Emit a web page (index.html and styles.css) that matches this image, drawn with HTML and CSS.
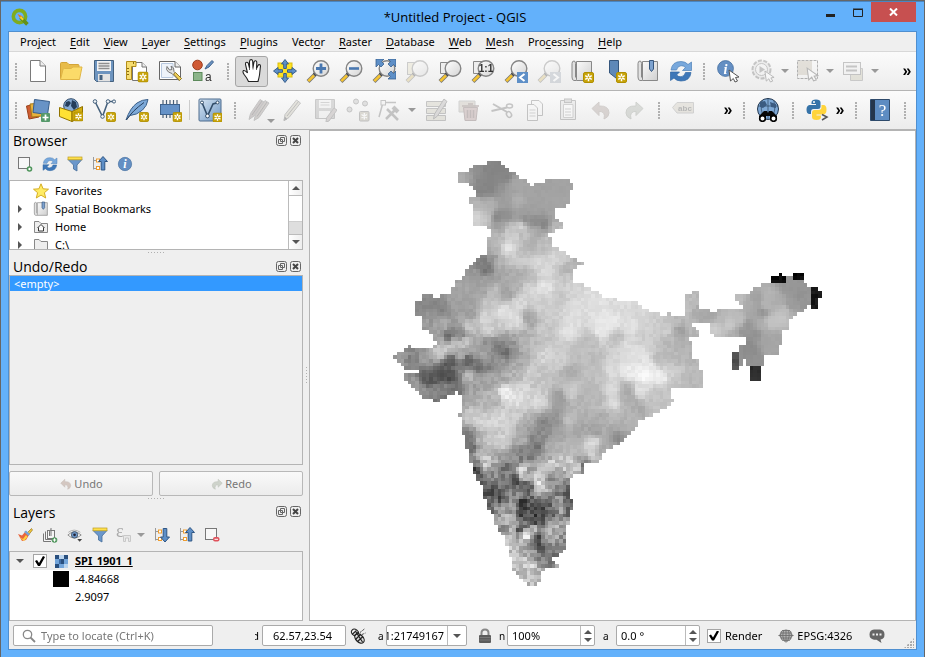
FILE: index.html
```html
<!DOCTYPE html>
<html lang="en">
<head>
<meta charset="utf-8">
<title>*Untitled Project - QGIS</title>
<link rel="stylesheet" href="styles.css">
</head>
<body>
<svg class="sprite" width="0" height="0" aria-hidden="true">
  <defs>
    <linearGradient id="gGlass" x1="0" y1="0" x2="1" y2="1"><stop offset="0" stop-color="#fff"/><stop offset="1" stop-color="#d4d4d4"/></linearGradient>
    <linearGradient id="gBlue" x1="0" y1="0" x2="1" y2="1"><stop offset="0" stop-color="#d8e6f3"/><stop offset="1" stop-color="#6c96c4"/></linearGradient>
    <linearGradient id="gPaper" x1="0" y1="0" x2="1" y2="1"><stop offset="0" stop-color="#fafafa"/><stop offset="1" stop-color="#cfcfcf"/></linearGradient>
  </defs>
  <symbol id="star" viewBox="0 0 11 11"><rect x=".5" y=".5" width="10" height="10" rx="1.5" fill="#c8a40a" stroke="#b08f00"/><path d="M5.500 1.800V9.200M2.200 3.700 8.800 7.300M8.800 3.700 2.200 7.300" stroke="#fff" stroke-width="1.500"/><circle cx="5.500" cy="5.500" r="1" fill="#c8a40a"/></symbol>
  <symbol id="cursor" viewBox="0 0 12 14"><path d="M1 1 11 8 7.500 8.500 9.500 12 7 13 5.300 9.500 2.500 12Z" fill="#fff" stroke="#555" stroke-width="1"/></symbol>
  <symbol id="lens" viewBox="0 0 24 24"><path d="M9.500 15 2 22.500" stroke="#777" stroke-width="4"/><path d="M8 16.500 2.300 22.200" stroke="#f5c431" stroke-width="2.600"/><path d="M10.500 13.500 8.500 15.500" stroke="#111" stroke-width="3.500"/><circle cx="15" cy="9.500" r="7.800" fill="url(#gGlass)" stroke="#858585" stroke-width="1.400"/></symbol>
  <symbol id="new" viewBox="0 0 24 24"><path d="M4.500 1.500H14L19.500 7V22.500H4.500Z" fill="#fff" stroke="#7a7a7a"/><path d="M14 1.500V7H19.500" fill="#eee" stroke="#7a7a7a"/></symbol>
  <symbol id="open" viewBox="0 0 24 24"><path d="M1.500 19.500V4.500Q1.500 3.500 2.500 3.500H8L10 5.500H19Q20 5.500 20 6.500V20Z" fill="#e8bc4a" stroke="#d3a437"/><path d="M1.500 20.500 4 10.500Q4.300 9.500 5.500 9.500H12L14 8H23L20.500 20.500Z" fill="#fbdb69" stroke="#e0b646"/></symbol>
  <symbol id="save" viewBox="0 0 24 24"><path d="M2.500 1.500H21.500V22.500H4.500L2.500 20.500Z" fill="#6d94bf" stroke="#44617f"/><rect x="5" y="2" width="14" height="10" fill="#f3f3f3"/><path d="M6.500 4.500H17.500M6.500 7H17.500M6.500 9.500H17.500" stroke="#8f8f8f" stroke-width="1.300"/><rect x="6" y="15" width="12" height="7.500" fill="#e3e3e3"/><rect x="7.500" y="16" width="3" height="5" fill="#44617f"/></symbol>
  <symbol id="layout" viewBox="0 0 24 24"><path d="M7.500 3.500H17L21.500 8V21.500H7.500Z" fill="#fff" stroke="#777"/><path d="M17 3.500V8H21.500" fill="#eee" stroke="#777"/><path d="M1.500 2.500H11V7.500H6.500V20.500H1.500Z" fill="#f6dd70" stroke="#b38d18"/><path d="M2 9.500H4M2 12.500H4M2 15.500H4M8.500 3V5" stroke="#8a6b10"/></symbol>
  <symbol id="layoutnew" viewBox="0 0 24 24"><use href="#layout" width="24" height="24"/><use href="#star" x="12.500" y="12.500" width="11" height="11"/></symbol>
  <symbol id="manager" viewBox="0 0 24 24"><path d="M1.500 2.500H17L22.500 8V20.500H1.500Z" fill="#fff" stroke="#666"/><path d="M3.500 4.500H15V18.500H3.500Z" fill="#eef3fa" stroke="#b8c9e0"/><path d="M17 2.500V8H22.500" fill="#eee" stroke="#666"/><path d="M9 7.500Q7.500 11 10.500 13L14 14.500 21 21.500 23 19.500 16 12.500Q16.500 8 13 7L14 10.500 11.500 11Z" fill="#e4e4e4" stroke="#777"/><path d="M15.500 15 21.500 21.500 23.500 19.500 17.500 13.500Z" fill="#f4d35b" stroke="#91782a"/></symbol>
  <symbol id="style" viewBox="0 0 24 24"><circle cx="6.500" cy="6" r="4.800" fill="#cf5a35" stroke="#9c3d1e"/><path d="M14 10 16 6.500 21 1.500 22.500 3 18 8Z" fill="#6a92c2" stroke="#3f638d"/><rect x="2.500" y="13.500" width="8.500" height="8" fill="#8cb58a" stroke="#5c8a5b"/><text x="14" y="22" font-family="Liberation Sans, sans-serif" font-size="12" fill="#333">a</text></symbol>
  <symbol id="hand" viewBox="0 0 24 26"><path d="M8.500 23.500Q7 20 4.500 17 2 13.500 3.500 12.500 5 12 7.500 15L5.500 6.500Q5.200 4.500 6.500 4.300 8 4 8.500 6L9.500 10V3.500Q9.700 1.500 11.300 1.500 12.600 1.700 12.700 3.500L13 9.500 14 4Q14.500 2.400 15.800 2.800 17 3.200 16.800 5L16.500 10.500 18 7.500Q19 6 20.200 7 20.800 7.800 20.300 9.500L19.500 17Q19 20 18 23.500Z" fill="#fff" stroke="#222" stroke-width="1.100"/><path d="M9.500 9V12M13 9V11.500M16.500 10V12" stroke="#333" stroke-width=".8"/></symbol>
  <symbol id="pansel" viewBox="0 0 24 24"><rect x="5" y="4" width="14" height="14" fill="#ffe11f" stroke="#d9bd10"/><path d="M12 .5 15.500 5H13.300V9.500H10.700V5H8.500ZM12 23.500 15.500 19H13.300V14.500H10.700V19H8.500ZM.5 12 5 8.500V10.700H9.500V13.300H5V15.500ZM23.500 12 19 8.500V10.700H14.500V13.300H19V15.500Z" fill="#5e8fc7" stroke="#2f5684" stroke-width=".9"/></symbol>
  <symbol id="zoomin" viewBox="0 0 24 24"><use href="#lens" width="24" height="24"/><path d="M15 4.500V14.500M10 9.500H20" stroke="#4a78b0" stroke-width="2.800"/></symbol>
  <symbol id="zoomout" viewBox="0 0 24 24"><use href="#lens" width="24" height="24"/><path d="M10 9.500H20" stroke="#4a78b0" stroke-width="2.600"/></symbol>
  <symbol id="zoomfull" viewBox="0 0 24 24"><use href="#lens" width="24" height="24"/><path d="M4 0H12L9.500 2.500 12 5 9 8 6.500 5.500 4 8ZM24 0V8L21.500 5.500 19 8 16 5 18.500 2.500 16 0ZM24 20V12L21.500 14.500 19 12 16 15 18.500 17.500 16 20Z" fill="#5e8fc7" stroke="#38618f" stroke-width=".8"/></symbol>
  <symbol id="zoomsel" viewBox="0 0 24 24"><rect x="2.500" y="3.500" width="12" height="12" fill="#e8dfa9" stroke="#888"/><use href="#lens" width="24" height="24"/></symbol>
  <symbol id="zoomlayer" viewBox="0 0 24 24"><path d="M2.500 3.500H13V14.500H2.500Z" fill="#eee" stroke="#888"/><use href="#lens" width="24" height="24"/></symbol>
  <symbol id="zoomnative" viewBox="0 0 24 24"><path d="M2.500 2.500H13V14.500H2.500Z" fill="#eee" stroke="#888"/><use href="#lens" width="24" height="24"/><text x="15" y="13" text-anchor="middle" font-family="Liberation Sans, sans-serif" font-weight="bold" font-size="10" fill="#333">1:1</text></symbol>
  <symbol id="zoomlast" viewBox="0 0 24 24"><use href="#lens" width="24" height="24"/><rect x="13" y="13" width="11" height="11" fill="#5e8fc7"/><path d="M20.500 15 16 18.500 20.500 22" fill="none" stroke="#fff" stroke-width="2"/></symbol>
  <symbol id="zoomnext" viewBox="0 0 24 24"><use href="#lens" width="24" height="24"/><rect x="13" y="13" width="11" height="11" fill="#9fb0c4"/><path d="M16.500 15 21 18.500 16.500 22" fill="none" stroke="#fff" stroke-width="2"/></symbol>
  <symbol id="book" viewBox="0 0 24 24"><path d="M6.500 2.500H21.500V21.500H6.500Z" fill="url(#gPaper)" stroke="#888"/><path d="M6.500 21.500H4Q2 21.500 2 18V4.500Q2 2 4 2 5.500 2 5.500 4.500V18.500" fill="#e2e2e2" stroke="#888"/></symbol>
  <symbol id="mapview" viewBox="0 0 24 24"><use href="#book" width="24" height="24"/><use href="#star" x="13" y="13" width="11" height="11"/></symbol>
  <symbol id="bookmarknew" viewBox="0 0 24 24"><path d="M6.500 1.500H15.500V21L11 17.500 6.500 14Z" fill="#5e88b8" stroke="#36567d"/><use href="#star" x="13" y="13" width="11" height="11"/></symbol>
  <symbol id="bookmarks" viewBox="0 0 24 24"><use href="#book" width="24" height="24"/><path d="M13.500 1.500H17.500V10L15.500 12.500 13.500 10Z" fill="#7da2cf" stroke="#36567d"/></symbol>
  <symbol id="refresh" viewBox="0 0 24 24"><path d="M2 11Q3 2.500 12 2.500 16.500 2.500 19 5.500L22.500 3V11.500H13.500L16.500 8.500Q14.500 6.500 12 6.700 8.500 7 7.500 11Z" fill="#78a8dc" stroke="#4c80b8" stroke-width=".7"/><path d="M22 13.500Q21 22 12 22 7.500 22 5 19L1.500 21.500V13H10.500L7.500 16Q9.500 18 12 17.800 15.500 17.500 16.500 13.500Z" fill="#3e77b8" stroke="#2e65a3" stroke-width=".7"/></symbol>
  <symbol id="infodot" viewBox="0 0 24 24"><circle cx="12" cy="12" r="10" fill="#648fc3" stroke="#456f9f"/><text x="12" y="18.500" text-anchor="middle" font-family="Liberation Serif, serif" font-weight="bold" font-style="italic" font-size="18" fill="#fff">i</text></symbol>
  <symbol id="identify" viewBox="0 0 24 24"><use href="#infodot" x="0" y="0" width="19" height="19"/><use href="#cursor" x="12" y="10" width="12" height="14"/></symbol>
  <symbol id="action" viewBox="0 0 24 24"><circle cx="10.500" cy="10.500" r="9" fill="#ddd" stroke="#777" stroke-width="2" stroke-dasharray="4 1.500"/><circle cx="10.500" cy="10.500" r="6" fill="#eee" stroke="#777"/><path d="M8.500 7 14 10.500 8.500 14Z" fill="#777"/><use href="#cursor" x="13" y="11" width="11" height="13"/></symbol>
  <symbol id="select" viewBox="0 0 24 24"><rect x="1.500" y="1.500" width="20" height="18" fill="none" stroke="#444" stroke-dasharray="3 1"/><rect x="2" y="2" width="14" height="14" fill="#c9bc97"/><use href="#cursor" x="10" y="8" width="13" height="15"/></symbol>
  <symbol id="form" viewBox="0 0 24 24"><path d="M9.500 9.500H21.500V21.500H9.500Z" fill="#cfc49f" stroke="#888"/><rect x="2.500" y="3.500" width="17" height="12" fill="#eee" stroke="#777"/><path d="M5 7.500H16M5 11.500H16" stroke="#777" stroke-width="2"/></symbol>
  <symbol id="source" viewBox="0 0 24 24"><path d="M.5 8 11 6 13 19 3 21Z" fill="#cf5d32" stroke="#9b4019"/><path d="M4 6 15 5 16 18 6 19Z" fill="#e8b23e" stroke="#a87a19"/><path d="M8.500 1.500 23.500 3.500 21.500 16.500 7 14.500Z" fill="#6893c6" stroke="#375d8a"/><rect x="15" y="15" width="9" height="9" rx="1" fill="#55996a"/><path d="M19.500 16.500V22.500M16.500 19.500H22.500" stroke="#fff" stroke-width="1.700"/></symbol>
  <symbol id="gpkg" viewBox="0 0 24 24"><circle cx="12" cy="8" r="7.300" fill="#86abd3" stroke="#2e4a69"/><path d="M7 4 10 3 12 5 9 9 6 8ZM13 2 17 4 18 9 15 12 12 8Z" fill="#253e5b"/><path d="M.5 9.500 13 13.500V23.500L.5 18.500Z" fill="#ffe133" stroke="#917300"/><path d="M13 13.500 23.500 8.500V18.500L13 23.500Z" fill="#d2ad10" stroke="#917300"/><use href="#star" x="14.500" y="13.500" width="10" height="10"/></symbol>
  <symbol id="vector" viewBox="0 0 24 24"><path d="M3 3.500 10.500 18.500 16 3.500H22" fill="none" stroke="#435f7b" stroke-width="1.500"/><g fill="#f2f5f8" stroke="#435f7b"><circle cx="3" cy="3.500" r="1.800"/><circle cx="16" cy="3.500" r="1.800"/><circle cx="22" cy="3.500" r="1.600"/><circle cx="10.500" cy="18.500" r="1.800"/></g></symbol>
  <symbol id="shape" viewBox="0 0 24 24"><use href="#vector" width="24" height="24"/><use href="#star" x="14" y="14" width="10" height="10"/></symbol>
  <symbol id="feather" viewBox="0 0 24 24"><path d="M1 22Q5 10 12 5 17 1.500 23 1.500 22 8 17.500 12 12 17 5 17.500Z" fill="#7da9d8" stroke="#3b5f88"/><path d="M1.500 22Q7 13 19 4.500" stroke="#27405f" fill="none"/><use href="#star" x="14" y="14" width="10" height="10"/></symbol>
  <symbol id="chip" viewBox="0 0 24 24"><path d="M5 2V20M8.500 2V20M12 2V20M15.500 2V20M19 2V20" stroke="#4b6076" stroke-width="1.200"/><rect x="2.500" y="6.500" width="19" height="10" fill="#6592c7" stroke="#3f638d"/><use href="#star" x="14.500" y="14" width="10" height="10"/></symbol>
  <symbol id="virtual" viewBox="0 0 24 24"><rect x="1" y="1" width="22" height="22" rx="1" fill="url(#gBlue)" stroke="#4e6d8e"/><path d="M4 4.500 9.500 18 15 6 20.500 4.500" fill="none" stroke="#334e6a" stroke-width="1.600"/><circle cx="9.500" cy="18" r="1.900" fill="#fff" stroke="#334e6a"/><circle cx="4" cy="4.500" r="1.500" fill="#fff" stroke="#334e6a"/><circle cx="19.500" cy="4.500" r="1.500" fill="#fff" stroke="#334e6a"/><use href="#star" x="14.500" y="14.500" width="10" height="10"/></symbol>
  <symbol id="pencil" viewBox="0 0 24 24"><path d="M16.500 2 20.500 5 9 19.500 4 22.500 5 16.500Z" fill="#c9c3a4" stroke="#777"/><path d="M18.500 3.500 7 18M4 22.500 5 19 7 21Z" stroke="#666" fill="#444"/></symbol>
  <symbol id="edits" viewBox="0 0 24 24"><path d="M13 1.500 17 4 7 18 2 21.500 3.500 15.500Z" fill="#9b8383" stroke="#777"/><path d="M18 2.500 22 5 12 19.500 7 22.500 8.500 16.500Z" fill="#a4918a" stroke="#777"/><path d="M15 3 5 17M20 4 10 18.500" stroke="#555"/></symbol>
  <symbol id="saveedit" viewBox="0 0 24 24"><g opacity=".8"><path d="M2.500 1.500H21.500V20.500H2.500Z" fill="#999" stroke="#666"/><rect x="6" y="2" width="12" height="8" fill="#eee"/><rect x="6" y="13" width="11" height="7" fill="#eee"/><path d="M7.500 4.500H16.500M7.500 7H16.500" stroke="#888"/></g><path d="M21 10 24 12 16 23 13 24 13.500 20Z" fill="#b3a0a0" stroke="#777"/></symbol>
  <symbol id="points" viewBox="0 0 24 24"><g fill="#bbb" stroke="#777"><circle cx="10" cy="3.500" r="2.500"/><circle cx="19" cy="5.500" r="2.500"/><circle cx="3.500" cy="11.500" r="2.500"/></g><rect x="13.500" y="13.500" width="9.500" height="9.500" rx="1" fill="#b6ae8c" stroke="#777"/><path d="M18.300 15V21.500M15.500 16.500 21 20M21 16.500 15.500 20" stroke="#fff" stroke-width="1.400"/></symbol>
  <symbol id="vertex" viewBox="0 0 24 24"><path d="M5 4.500H18M5 4.500 1 19" stroke="#777" fill="none" stroke-width="1.500"/><rect x="3" y="2.500" width="4.500" height="4.500" fill="#eee" stroke="#777"/><path d="M9 11 20 22M18 11 8 21" stroke="#777" stroke-width="2.500"/><path d="M15 9 20 14" stroke="#777" stroke-width="4"/></symbol>
  <symbol id="attrs" viewBox="0 0 24 24"><g fill="#cfc9a7" stroke="#777"><path d="M2.500 3.500H21.500V8.500H2.500ZM2.500 10.500H21.500V15.500H2.500ZM2.500 17.500H21.500V22.500H2.500Z"/></g><path d="M20 1 23 3.500 13.500 18 9.500 21 10.500 16Z" fill="#b2aeb0" stroke="#666"/></symbol>
  <symbol id="trash" viewBox="0 0 24 24"><path d="M2 3H18V14H2Z" fill="#c8bca5" stroke="#999"/><path d="M6.500 9.500H20.500L19 22.500H8Z" fill="#c68f8f" stroke="#8a6262"/><path d="M5 8H22M11 6H16M10.500 12V20M13.500 12V20M16.500 12V20" stroke="#8a6262" stroke-width="1.500"/></symbol>
  <symbol id="cut" viewBox="0 0 24 24"><path d="M3 6 17 14M1.500 13 17 9.500" stroke="#777" stroke-width="2"/><ellipse cx="19.500" cy="8" rx="3" ry="2" fill="none" stroke="#777" stroke-width="1.500"/><ellipse cx="19" cy="16.500" rx="2.300" ry="3" transform="rotate(-35 19 16.500)" fill="none" stroke="#777" stroke-width="1.500"/></symbol>
  <symbol id="copy" viewBox="0 0 24 24"><g fill="#f4f4f4" stroke="#777"><path d="M8.500 2.500H16L19.500 6V17.500H8.500Z"/><path d="M4.500 6.500H11L14.500 10V22.500H4.500Z"/></g><path d="M6.500 12H12.500M6.500 15H12.500M6.500 18H12.500" stroke="#999"/></symbol>
  <symbol id="paste" viewBox="0 0 24 24"><path d="M4.500 2.500H19.500V21.500H4.500Z" fill="#dedede" stroke="#777"/><path d="M7.500 6.500H17V19.500H7.500Z" fill="#fafafa" stroke="#999"/><rect x="8.500" y="1" width="7" height="3.500" fill="#bbb" stroke="#777"/><path d="M9 11H15M9 14H15M9 17H15" stroke="#999"/></symbol>
  <symbol id="undo" viewBox="0 0 24 24"><path d="M3 10.500 10 4V8Q20 7.500 20 15 20 19 15 21 17 13.500 10 13.300V17.500Z" fill="#b59c90" stroke="#a08d84"/></symbol>
  <symbol id="redo" viewBox="0 0 24 24"><path d="M21 10.500 14 4V8Q4 7.500 4 15 4 19 9 21 7 13.500 14 13.300V17.500Z" fill="#a9b3a3" stroke="#8d9887"/></symbol>
  <symbol id="label" viewBox="0 0 24 24"><path d="M1.500 9.500 6 4.500H22.500V15H6Z" fill="#cfc9ad" stroke="#999"/><text x="14" y="13" text-anchor="middle" font-family="Liberation Sans, sans-serif" font-weight="bold" font-size="8" fill="#555">abc</text></symbol>
  <symbol id="metasearch" viewBox="0 0 24 24"><circle cx="12" cy="11" r="10.500" fill="#7fa9d6" stroke="#20354e"/><path d="M12 .5V21M2 8H22M6 3Q4 11 7 19M18 3Q20 11 17 19" stroke="#20354e" fill="none" stroke-width=".6"/><path d="M4 4 9 3 11 7 7 10 4 9ZM14 4 20 6 20 10 15 9Z" fill="#3b5b81"/><path d="M8 13H11L12 15 13 13H16L21 18V22H14V18H10V22H3V18Z" fill="#080808"/><circle cx="6.500" cy="20.500" r="2.800" fill="#fff" stroke="#000" stroke-width="1.600"/><circle cx="17.500" cy="20.500" r="2.800" fill="#fff" stroke="#000" stroke-width="1.600"/></symbol>
  <symbol id="python" viewBox="0 0 24 24"><path d="M6.500 6V4.500Q6.500 1.500 11 1.500T15.500 4.500V9Q15.500 11 13 11H8.500Q6 11 6 14V16H4Q1.500 15.500 1.500 11.500T4.500 7H11V6Z" fill="#3673a8"/><path d="M16.500 7H18.500Q21.500 7 21.500 11.500T18.500 16.500H11.500V17.500H16V19Q16 22 11.500 22T7 19V15Q7 12 9.500 12H13.500Q16.500 12 16.500 9Z" fill="#ffd43b"/><circle cx="9" cy="4" r="1" fill="#fff"/><path d="M17 16.500 22 19 17 22" stroke="#555" stroke-width="1.500" fill="none"/></symbol>
  <symbol id="help" viewBox="0 0 24 24"><path d="M2.500 1.500H21.500V22.500H2.500Z" fill="#5d8cc2" stroke="#2e4a6b"/><path d="M3 2H7V22H3Z" fill="#25364c"/><text x="14.500" y="17.500" text-anchor="middle" font-family="Liberation Serif, serif" font-size="17" fill="#fff">?</text></symbol>
  <symbol id="addlayer" viewBox="0 0 16 16"><rect x="1.500" y="1.500" width="11" height="11" fill="#f7f7f7" stroke="#777"/><circle cx="12.500" cy="13" r="2.800" fill="#4e955b"/><circle cx="12.500" cy="13" r="1.200" fill="#fff"/></symbol>
  <symbol id="funnel" viewBox="0 0 16 16"><path d="M1 3.500H15L10 9V15L6.500 13V9Z" fill="#6b97cb" stroke="#446d9b" stroke-width=".8"/><rect x="1" y="1" width="14" height="2.800" fill="#ffe04c" stroke="#bd9d20" stroke-width=".7"/></symbol>
  <symbol id="treebase" viewBox="0 0 16 16"><path d="M1.500 1V13.500M1.500 4.500H4M1.500 12.500H4" stroke="#999"/><rect x="4.500" y="3" width="3" height="3" fill="#fff" stroke="#ef9d2f"/><rect x="4.500" y="10.500" width="3" height="3" fill="#fff" stroke="#ef9d2f"/></symbol>
  <symbol id="collapse" viewBox="0 0 16 16"><use href="#treebase" width="16" height="16"/><path d="M11 .5 15.500 5.500H12.800V14H9.200V5.500H6.500Z" fill="#5e8fc7" stroke="#2f5684"/></symbol>
  <symbol id="expand" viewBox="0 0 16 16"><use href="#treebase" width="16" height="16"/><path d="M11 15 15.500 10H12.800V1.500H9.200V10H6.500Z" fill="#5e8fc7" stroke="#2f5684"/></symbol>
  <symbol id="fav" viewBox="0 0 16 16"><path d="M8 .8 10.100 5.800 15.500 6.200 11.400 9.700 12.700 15 8 12.100 3.300 15 4.600 9.700.5 6.200 5.900 5.800Z" fill="#ffec64" stroke="#d5ad24"/></symbol>
  <symbol id="folder" viewBox="0 0 16 16"><path d="M1.500 13.500V2.500H6L8 4.500H14.500V13.500Z" fill="#eee" stroke="#888"/></symbol>
  <symbol id="home" viewBox="0 0 16 16"><use href="#folder" width="16" height="16"/><path d="M4.500 9 8 5.500 11.500 9M5.500 8.500V12H10.500V8.500" fill="#fff" stroke="#333"/></symbol>
  <symbol id="brush" viewBox="0 0 16 16"><path d="M10 6 14.500 1.500 15.500 3 11.500 8Z" fill="#f0c63b" stroke="#9c7b27" stroke-width=".7"/><path d="M1 7 5 8.500 8 5 12 8 9 13 5 14Z" fill="#e9653d"/><path d="M2 10 6 12 9 8 10.500 10 7 14Z" fill="#ffcf3c"/><path d="M7 5 9 3.500 13 7 11.500 9Z" fill="#77a4d4"/></symbol>
  <symbol id="group" viewBox="0 0 16 16"><g fill="#f5f5f5" stroke="#777"><path d="M1.500 6.500V14.500H9M3.500 4.500V12.500H11"/><rect x="5.500" y="3.500" width="7" height="8"/><path d="M9 1V9M7.500 9V5Q7.500 3 9 3"/></g><circle cx="12.500" cy="13" r="2.800" fill="#4e955b"/><path d="M12.500 11.300V14.700M10.800 13H14.200" stroke="#fff"/></symbol>
  <symbol id="eye" viewBox="0 0 18 16"><path d="M1 8Q8 1 16 8 8 15 1 8Z" fill="#f4f4f4" stroke="#888"/><circle cx="8.500" cy="7.800" r="3.600" fill="#6d98cc" stroke="#456"/><circle cx="8.500" cy="7.800" r="1.500" fill="#223"/><path d="M1.500 5Q8 0 15 5" fill="none" stroke="#aaa"/><path d="M11.500 12.500H17L14.200 15.500Z" fill="#444"/></symbol>
  <symbol id="expr" viewBox="0 0 16 16"><text x="0" y="10" font-family="Liberation Serif, serif" font-size="18" fill="#555">ε</text><path d="M7.500 8.500H14.500V14.500H12.500V11H9.500V14.500H7.500Z" fill="#ddd" stroke="#999"/></symbol>
  <symbol id="remove" viewBox="0 0 16 16"><rect x="1.500" y="1.500" width="11" height="11" fill="#f7f7f7" stroke="#777"/><rect x="9" y="10" width="6.500" height="4.500" rx="2" fill="#e0525c"/><path d="M10.500 12.300H14" stroke="#fff"/></symbol>
  <symbol id="raster" viewBox="0 0 13 13"><path d="M0 0H13V13H0Z" fill="#73a5da"/><path d="M0 0H4V4H0ZM9 0H13V4H9ZM4 4H9V9H4ZM0 9H4V13H0Z" fill="#294f7e"/><path d="M4 0H9V4H4ZM9 9H13V13H9Z" fill="#bad4ee"/><path d="M4 4H6V9H4Z" fill="#3e6ba4"/></symbol>
  <symbol id="float" viewBox="0 0 11 11"><rect x=".5" y=".5" width="10" height="10" rx="2" fill="none" stroke="#666"/><path d="M4.500 2.500H8.500V6.500H4.500ZM2.500 4.500H6.500V8.500H2.500Z" fill="#eee" stroke="#666"/></symbol>
  <symbol id="close" viewBox="0 0 11 11"><rect x=".5" y=".5" width="10" height="10" rx="2" fill="none" stroke="#666"/><path d="M3 3 8 8M8 3 3 8" stroke="#444" stroke-width="2"/></symbol>
</svg>

<div class="window">
  <header class="titlebar">
    <svg class="logo" width="18" height="18" viewBox="0 0 17 17" aria-hidden="true"><circle cx="8" cy="8" r="5.800" fill="none" stroke="#7fac1f" stroke-width="3.400"/><path d="M9 9 15.500 15.500" stroke="#64911a" stroke-width="3.500"/><path d="M6 5.500 11 8 9 10.500Z" fill="#ee7913"/><path d="M9 8.500 11.500 11" stroke="#f5d32d" stroke-width="2"/></svg>
    <h1>*Untitled Project - QGIS</h1>
    <div class="winbtns">
      <button class="wmin" aria-label="Minimize"><svg width="9" height="3"><rect width="9" height="3" fill="#222"/></svg></button>
      <button class="wmax" aria-label="Maximize"><svg width="10" height="9"><path d="M.5 1.500H9.500V8.500H.5ZM0 1H10" fill="none" stroke="#222"/></svg></button>
      <button class="wclose" aria-label="Close"><svg width="9" height="8"><path d="M1 .5 8 7.500M8 .5 1 7.500" stroke="#fff" stroke-width="2"/></svg></button>
    </div>
  </header>
  <div class="client">
    <nav class="menu">
      <button>Pro<u>j</u>ect</button><button><u>E</u>dit</button><button><u>V</u>iew</button><button><u>L</u>ayer</button><button><u>S</u>ettings</button><button><u>P</u>lugins</button><button>Vect<u>o</u>r</button><button><u>R</u>aster</button><button><u>D</u>atabase</button><button><u>W</u>eb</button><button><u>M</u>esh</button><button>Pro<u>c</u>essing</button><button><u>H</u>elp</button>
    </nav>
    <div class="toolbar" role="toolbar" aria-label="Project and navigation">
      <span class="grip first"></span>
      <button aria-label="New"><svg><use href="#new"/></svg></button>
      <button aria-label="Open"><svg><use href="#open"/></svg></button>
      <button aria-label="Save"><svg><use href="#save"/></svg></button>
      <button aria-label="New layout"><svg><use href="#layoutnew"/></svg></button>
      <button aria-label="Layout manager"><svg><use href="#manager"/></svg></button>
      <button aria-label="Style manager"><svg><use href="#style"/></svg></button>
      <span class="grip second"></span>
      <button class="active" aria-label="Pan"><svg><use href="#hand"/></svg></button>
      <button aria-label="Pan to selection"><svg><use href="#pansel"/></svg></button>
      <button aria-label="Zoom in"><svg><use href="#zoomin"/></svg></button>
      <button aria-label="Zoom out"><svg><use href="#zoomout"/></svg></button>
      <button aria-label="Zoom full"><svg><use href="#zoomfull"/></svg></button>
      <button disabled aria-label="Zoom to selection"><svg><use href="#zoomsel"/></svg></button>
      <button aria-label="Zoom to layer"><svg><use href="#zoomlayer"/></svg></button>
      <button aria-label="Zoom native"><svg><use href="#zoomnative"/></svg></button>
      <button aria-label="Zoom last"><svg><use href="#zoomlast"/></svg></button>
      <button disabled aria-label="Zoom next"><svg><use href="#zoomnext"/></svg></button>
      <button aria-label="New map view"><svg><use href="#mapview"/></svg></button>
      <button aria-label="New bookmark"><svg><use href="#bookmarknew"/></svg></button>
      <button aria-label="Show bookmarks"><svg><use href="#bookmarks"/></svg></button>
      <button aria-label="Refresh"><svg><use href="#refresh"/></svg></button>
      <span class="grip"></span>
      <button aria-label="Identify"><svg><use href="#identify"/></svg></button>
      <span class="drops">
        <button class="drop" disabled aria-label="Run action"><svg><use href="#action"/></svg><i></i></button>
        <button class="drop" disabled aria-label="Select features"><svg><use href="#select"/></svg><i></i></button>
        <button class="drop" disabled aria-label="Select by form"><svg><use href="#form"/></svg><i></i></button>
      </span>
      <button class="more end" aria-label="More">»</button>
    </div>
    <div class="toolbar spaced" role="toolbar" aria-label="Data and editing">
      <span class="grip first"></span>
      <button aria-label="Data sources"><svg><use href="#source"/></svg></button>
      <button aria-label="New GeoPackage"><svg><use href="#gpkg"/></svg></button>
      <button aria-label="New shapefile"><svg><use href="#shape"/></svg></button>
      <button aria-label="New SpatiaLite"><svg><use href="#feather"/></svg></button>
      <button aria-label="New memory layer"><svg><use href="#chip"/></svg></button>
      <span class="sep"></span>
      <button aria-label="New virtual layer"><svg><use href="#virtual"/></svg></button>
      <span class="grip"></span>
      <button class="corner" disabled aria-label="Current edits"><svg><use href="#edits"/></svg><i></i></button>
      <button disabled aria-label="Toggle editing"><svg><use href="#pencil"/></svg></button>
      <button disabled aria-label="Save edits"><svg><use href="#saveedit"/></svg></button>
      <button disabled aria-label="Add point"><svg><use href="#points"/></svg></button>
      <button class="drop" disabled aria-label="Vertex tool"><svg><use href="#vertex"/></svg><i></i></button>
      <button disabled aria-label="Modify attributes"><svg><use href="#attrs"/></svg></button>
      <button disabled aria-label="Delete"><svg><use href="#trash"/></svg></button>
      <button disabled aria-label="Cut"><svg><use href="#cut"/></svg></button>
      <button disabled aria-label="Copy"><svg><use href="#copy"/></svg></button>
      <button disabled aria-label="Paste"><svg><use href="#paste"/></svg></button>
      <button disabled aria-label="Undo"><svg><use href="#undo"/></svg></button>
      <button disabled aria-label="Redo"><svg><use href="#redo"/></svg></button>
      <span class="grip"></span>
      <button disabled aria-label="Labels"><svg><use href="#label"/></svg></button>
      <button class="more far" aria-label="More">»</button>
      <span class="grip"></span>
      <button aria-label="MetaSearch"><svg><use href="#metasearch"/></svg></button>
      <span class="grip"></span>
      <button aria-label="Python console"><svg><use href="#python"/></svg></button>
      <button class="more" aria-label="More">»</button>
      <span class="grip"></span>
      <button aria-label="Help contents"><svg><use href="#help"/></svg></button>
      <span class="grip"></span>
    </div>
    <main class="work">
      <aside class="docks">
        <section class="browser">
          <div class="dockhead"><h2>Browser</h2><button aria-label="Float"><svg><use href="#float"/></svg></button><button aria-label="Close"><svg><use href="#close"/></svg></button></div>
          <div class="minibar">
            <button aria-label="Add selected layers"><svg><use href="#addlayer"/></svg></button>
            <button aria-label="Refresh"><svg><use href="#refresh"/></svg></button>
            <button aria-label="Filter"><svg><use href="#funnel"/></svg></button>
            <button aria-label="Collapse all"><svg><use href="#collapse"/></svg></button>
            <button aria-label="Properties"><svg><use href="#infodot"/></svg></button>
          </div>
          <div class="box files">
            <ul>
              <li><b></b><svg><use href="#fav"/></svg>Favorites</li>
              <li><b class="tri"></b><svg><use href="#bookmarks"/></svg>Spatial Bookmarks</li>
              <li><b class="tri"></b><svg><use href="#home"/></svg>Home</li>
              <li><b class="tri"></b><svg><use href="#folder"/></svg>C:\</li>
            </ul>
            <div class="scroll"><button class="up" aria-label="Scroll up"></button><span></span><button class="down" aria-label="Scroll down"></button></div>
          </div>
        </section>
        <div class="splitter"></div>
        <section class="history">
          <div class="dockhead"><h2>Undo/Redo</h2><button aria-label="Float"><svg><use href="#float"/></svg></button><button aria-label="Close"><svg><use href="#close"/></svg></button></div>
          <div class="box stack"><p>&lt;empty&gt;</p></div>
          <div class="pair">
            <button disabled><svg><use href="#undo"/></svg>Undo</button>
            <button disabled><svg><use href="#redo"/></svg>Redo</button>
          </div>
        </section>
        <div class="splitter low"></div>
        <section class="layers">
          <div class="dockhead"><h2>Layers</h2><button aria-label="Float"><svg><use href="#float"/></svg></button><button aria-label="Close"><svg><use href="#close"/></svg></button></div>
          <div class="minibar">
            <button aria-label="Layer styling"><svg><use href="#brush"/></svg></button>
            <button aria-label="Add group"><svg><use href="#group"/></svg></button>
            <button aria-label="Visibility"><svg><use href="#eye"/></svg></button>
            <button aria-label="Filter legend"><svg><use href="#funnel"/></svg></button>
            <button class="wide" disabled aria-label="Filter by expression"><svg><use href="#expr"/></svg><i></i></button>
            <button aria-label="Expand all"><svg><use href="#expand"/></svg></button>
            <button aria-label="Collapse all"><svg><use href="#collapse"/></svg></button>
            <button aria-label="Remove layer"><svg><use href="#remove"/></svg></button>
          </div>
          <div class="box legend">
            <div class="layer"><b class="tri open"></b><input type="checkbox" id="lyr" checked><svg><use href="#raster"/></svg><label for="lyr">SPI_1901_1</label></div>
            <div class="entry"><span class="swatch dark"></span>-4.84668</div>
            <div class="entry"><span class="swatch"></span>2.9097</div>
          </div>
        </section>
      </aside>
      <div class="vsplit"></div>
      <div class="map"><canvas id="map" width="604" height="488" role="img" aria-label="Raster layer SPI_1901_1"></canvas></div>
    </main>
    <footer class="status">
      <div class="locate"><svg width="14" height="14" viewBox="0 0 14 14" aria-hidden="true"><circle cx="5.500" cy="5.500" r="4.200" fill="none" stroke="#888" stroke-width="1.300"/><path d="M8.500 8.500 13 13" stroke="#888" stroke-width="1.800"/></svg><input type="text" aria-label="Locate" placeholder="Type to locate (Ctrl+K)"></div>
      <label class="clip" for="coord">d</label>
      <input class="coord" id="coord" type="text" value="62.57,23.54">
      <button class="flat ext" aria-label="Toggle extents"><svg width="16" height="16" viewBox="0 0 16 16"><ellipse cx="5" cy="4.500" rx="3.800" ry="3" transform="rotate(40 5 4.500)" fill="#eee" stroke="#222"/><ellipse cx="9.500" cy="10.500" rx="5.500" ry="3.600" transform="rotate(45 9.500 10.500)" fill="#ddd" stroke="#222" stroke-width="1.200"/><path d="M2 6.500 6.500 2.500M4 8 8.500 4M5.500 11.500 11 6M7.500 13.500 13 8.500M6 4 12.500 14" stroke="#222" stroke-width="1.200"/><path d="M10 4.500 15 .5M12 6.500 15.500 5" stroke="#444" stroke-dasharray="2 1"/></svg></button>
      <label class="tag" for="scale">a</label>
      <div class="scalebox"><select id="scale"><option>1:21749167</option></select><i></i></div>
      <button class="flat lock" aria-label="Lock scale"><svg width="14" height="16" viewBox="0 0 14 16"><path d="M3.500 8V5Q3.500 1.500 7 1.500T10.500 5V8" fill="none" stroke="#888" stroke-width="2"/><rect x="1" y="7" width="12" height="8" rx="1" fill="#5c5c5c"/><path d="M1.500 9.500H12.500M1.500 12H12.500" stroke="#777"/></svg></button>
      <label class="tag n" for="mag">n</label>
      <div class="spin big"><input id="mag" type="text" value="100%"><span><button class="up" aria-label="Increase magnification"></button><button class="down" aria-label="Decrease magnification"></button></span></div>
      <label class="tag r" for="rot">a</label>
      <div class="spin"><input id="rot" type="text" value="0.0 °"><span><button class="up" aria-label="Rotate right"></button><button class="down" aria-label="Rotate left"></button></span></div>
      <label class="render"><input type="checkbox" checked>Render</label>
      <button class="flat crs"><svg width="16" height="14" viewBox="0 0 16 14" aria-hidden="true"><path d="M4 1.500Q8-.5 12 1.500L15.500 6.500 12 10.500 8 13.500 4 10.500.5 6.500Z" fill="#b4b4b4"/><path d="M.5 6.500H15.500M2.500 4H13.500M2.500 9H13.500M4 11.300H12M5.500 1Q3.500 7 6.500 12.500M10.500 1Q12.500 7 9.500 12.500M8 .5V13.500M3.500 2Q.8 7 4 11M12.500 2Q15.200 7 12 11M4 1.500H12" stroke="#707070" stroke-width=".9" fill="none"/></svg>EPSG:4326</button>
      <button class="flat msg" aria-label="Messages"><svg width="16" height="15" viewBox="0 0 16 15"><path d="M5 .5H11Q15.500 1 15.500 5.500T11.500 10.500L12.500 14 7.500 10.700H5Q.5 10 .5 5.500T5 .5Z" fill="#666"/><path d="M3.500 4.500H5.500V6.500H3.500ZM7 4.500H9V6.500H7ZM10.500 4.500H12.500V6.500H10.500Z" fill="#eee"/></svg></button>
      <span class="sizegrip"></span>
    </footer>
  </div>
</div>
<script src="map.js"></script>
</body>
</html>
```
FILE: styles.css
```css
* { box-sizing: border-box; }
body { margin: 0; padding: 1px 1px 0; min-height: 100vh; background: #666; font: 11px/16px "Noto Sans", "Open Sans", sans-serif; color: #000; display: flex; }
button, input, select { font: inherit; color: inherit; margin: 0; padding: 0; border: 0; background: none; }
h1, h2, p, ul { margin: 0; padding: 0; font-weight: normal; }
ul { list-style: none; }
.sprite { position: absolute; }
.window { flex: 1; min-width: 0; display: flex; flex-direction: column; background: #63b1fb; border-top: 1px solid #4a86c2; padding: 0 8px 8px; }
.titlebar { height: 30px; display: flex; align-items: center; flex: none; }
.titlebar h1 { flex: 1; text-align: center; font: 13px/20px "Open Sans", sans-serif; padding-left: 64px; }
.logo { margin-left: 2px; }
.winbtns { display: flex; align-self: flex-start; }
.winbtns button { height: 21px; width: 27px; display: grid; place-items: center; }
.winbtns .wmin { align-items: end; padding-bottom: 6px; }
.winbtns .wclose { width: 45px; height: 20px; background: #c75050; }
.client { flex: 1; display: flex; flex-direction: column; background: #efefef; outline: 1px solid #4f8fd0; min-height: 0; }
.menu { display: flex; gap: 14px; padding: 0 11px; height: 20px; align-items: center; border-bottom: 1px solid #d8d8d8; flex: none; }
.menu u { text-underline-offset: 2px; }
.toolbar { height: 39px; flex: none; display: flex; align-items: center; background: linear-gradient(#fbfbfb, #ececec); border-bottom: 1px solid #b4b4b4; }
.toolbar button { width: 33px; height: 31px; flex: none; display: flex; align-items: center; justify-content: center; position: relative; }
.toolbar svg { width: 24px; height: 24px; flex: none; }
.toolbar .active { background: #dadada; border: 1px solid #a6a6a6; border-radius: 3px; }
.toolbar .active svg { width: 24px; height: 26px; }
.toolbar button:disabled svg { opacity: .38; filter: saturate(.5); }
.grip { width: 14px; height: 17px; flex: none; background: radial-gradient(circle at 1px 1px, #b0b0b0 1px, transparent 1px) 0 0 / 3px 3px; padding: 0 5px; background-clip: content-box; }
.spaced .grip { margin-left: 2px; }
.toolbar .first { width: 12px; margin-left: 0; padding: 0 3px 0 5px; }
.toolbar .second { margin-left: 2px; }
.sep { width: 1px; height: 20px; background: #ccc; margin: 0 3px; }
.drops { display: flex; margin-left: 3px; }
.toolbar .drop { width: 45px; justify-content: flex-start; padding-left: 4px; }
.toolbar i, .minibar i, .scalebox i { width: 0; height: 0; border: 4px solid transparent; border-top: 4px solid #999; border-bottom: 0; }
.drop i { margin-left: 6px; }
.corner i { position: absolute; right: 0; bottom: 3px; }
.toolbar .more { width: 14px; font: bold 16px/20px "Liberation Sans", sans-serif; }
.toolbar .end { margin-left: auto; margin-right: 2px; }
.toolbar .far { margin-left: 22px; }
.work { flex: 1; display: flex; min-height: 0; }
.docks { width: 294px; flex: none; display: flex; flex-direction: column; min-height: 0; }
.dockhead { display: flex; align-items: center; gap: 3px; height: 20px; padding: 0 2px 0 4px; }
.dockhead h2 { flex: 1; font: 14px/18px "Open Sans", sans-serif; padding-top: 2px; }
.dockhead button { width: 11px; height: 11px; display: flex; }
.dockhead svg { width: 11px; height: 11px; }
.minibar { display: flex; align-items: center; height: 28px; padding-left: 3px; }
.minibar button { width: 25px; height: 24px; display: flex; align-items: center; justify-content: center; }
.minibar svg { width: 16px; height: 16px; }
.minibar .wide { width: 37px; gap: 5px; }
.minibar .wide svg { opacity: .45; }
.box { background: #fff; border: 1px solid #b4b4b4; overflow: hidden; }
.files { height: 70px; display: flex; margin-top: 2px; }
.files ul { flex: 1; padding-top: 1px; }
.files li { display: flex; align-items: center; height: 18px; white-space: pre; }
.files li svg { width: 16px; height: 16px; margin: 0 6px 0 9px; }
.files li b { width: 14px; height: 8px; flex: none; }
.tri { clip-path: polygon(8px 0, 12px 4px, 8px 8px); background: #555; }
.scroll { width: 14px; display: flex; flex-direction: column; border-left: 1px solid #bbb; }
.scroll button { height: 14px; display: grid; place-items: center; background: linear-gradient(90deg, #fff, #eee); }
.scroll span { flex: 1; background: linear-gradient(#fff 66%, #bbb 66%, #dedede 68%); border: 1px solid #bbb; border-width: 1px 0; }
.up::before, .down::before { content: ""; display: block; width: 0; height: 0; border: 4px solid transparent; }
.up::before { border-bottom-color: #555; border-top: 0; }
.down::before { border-top-color: #555; border-bottom: 0; }
.splitter { height: 7px; flex: none; background: repeating-linear-gradient(90deg, #b0b0b0 0 1px, transparent 1px 3px) center 2px / 17px 1px no-repeat; }
.low { height: 6px; }
.history { flex: 1; display: flex; flex-direction: column; min-height: 0; }
.history .dockhead { height: 18px; }
.stack { flex: 1; background: #efefef; }
.stack p { background: #3399ff; color: #fff; padding-left: 4px; height: 15px; line-height: 15px; }
.pair { display: flex; gap: 6px; padding-top: 6px; }
.pair button { flex: 1; height: 25px; border: 1px solid #b8b8b8; border-radius: 2px; background: linear-gradient(#f9f9f9, #ececec); color: #777; display: flex; align-items: center; justify-content: center; gap: 1px; }
.pair svg { width: 14px; height: 14px; opacity: .5; }
.legend { height: 70px; margin-top: 2px; }
.layers .dockhead { height: 19px; }
.layer, .entry { display: flex; align-items: center; height: 18px; }
.layer { background: #efefef; font-weight: bold; text-decoration: underline; }
.layer svg { width: 13px; height: 13px; margin: 0 7px 0 8px; }
.layer .tri { width: 23px; height: 8px; clip-path: polygon(6px 2px, 14px 2px, 10px 6px); }
input[type=checkbox] { appearance: none; width: 14px; height: 14px; background: #fff; border: 1px solid #a5a5a5; display: grid; place-items: center; flex: none; }
input[type=checkbox]:checked::before { content: ""; width: 10px; height: 10px; background: #000; clip-path: polygon(8px 0, 10px 1px, 5px 10px, 3px 10px, 0 5px, 2px 4px, 4px 7px); }
.swatch { width: 16px; height: 16px; margin: 0 6px 0 43px; }
.dark { background: #000; }
.vsplit { width: 6px; flex: none; background: repeating-linear-gradient(#b0b0b0 0 1px, transparent 1px 3px) 3px center / 1px 17px no-repeat; }
.map { flex: 1; min-width: 0; background: #fff; border: 1px solid #b4b4b4; overflow: hidden; }
.map canvas { display: block; }
.status { height: 28px; flex: none; display: flex; align-items: center; padding: 1px 0 0 4px; position: relative; white-space: nowrap; }
.locate, .coord, .scalebox, .spin { height: 21px; border: 1px solid #aaa; border-radius: 2px; background: #fff; display: flex; align-items: center; flex: none; }
.locate { width: 200px; padding-left: 8px; gap: 5px; }
.locate input { flex: 1; min-width: 0; }
.locate input::placeholder { color: #777; opacity: 1; }
.clip { width: 4px; overflow: hidden; margin-left: 42px; direction: rtl; }
.coord { width: 84px; margin-left: 3px; padding-right: 3px; text-align: center; }
.flat { display: flex; align-items: center; flex: none; }
.ext { margin-left: 4px; }
.tag { width: 6px; overflow: hidden; margin: 0 2px 0 12px; flex: none; font-size: 10px; }
.scalebox { width: 81px; }
.scalebox select { appearance: none; width: 61px; height: 19px; border-right: 1px solid #bbb; overflow: hidden; text-overflow: clip; direction: rtl; padding-right: 3px; }
.scalebox i { margin: 0 5px; border-top-color: #555; }
.lock { margin-left: 11px; }
.tag.n { margin: 0 2px 0 7px; }
.spin { width: 84px; }
.spin.big { width: 88px; }
.spin input { flex: 1; min-width: 0; padding-left: 4px; }
.spin span { width: 14px; height: 19px; border-left: 1px solid #bbb; display: flex; flex-direction: column; justify-content: center; gap: 2px; }
.spin button { display: grid; place-items: center; height: 6px; }
.tag.r { margin: 0 7px 0 8px; }
.render { display: flex; align-items: center; gap: 4px; margin-left: 7px; }
.crs { gap: 3px; margin-left: 16px; }
.msg { margin-left: 17px; padding-top: 2px; }
.sizegrip { position: absolute; right: 2px; bottom: 1px; width: 10px; height: 10px; background: radial-gradient(circle at 1px 1px, #aaa 1px, transparent 1px) 0 0 / 3px 3px; clip-path: polygon(100% 0, 100% 100%, 0 100%); }
```
FILE: map.js
```js
// Draws the raster layer as square cells. Coordinates are in window space
// and shifted by the origin of the canvas.
const OX = 310, OY = 131, CELL = 3.6;

const outline = [
488,161,502,161,502,165,506,165,510,172,517,173,517,176,524,179,528,183,530,186,535,186,535,183,546,182,546,179,571,179,571,183,575,183,575,190,571,190,571,201,568,204,564,208,557,208,557,219,560,223,564,223,564,229,557,230,556,234,549,234,549,237,553,240,553,247,557,248,564,252,571,256,575,259,582,261,582,263,586,263,586,266,578,267,571,272,575,276,575,281,571,284,582,284,593,289,601,295,
611,299,636,302,643,309,650,311,660,314,665,317,669,313,673,316,684,317,684,296,691,295,691,291,698,291,698,310,709,310,712,312,721,310,741,310,741,306,738,303,734,302,734,295,749,295,749,291,757,288,763,284,770,284,770,277,778,277,778,273,781,273,781,277,792,277,792,273,803,273,803,281,807,284,810,288,817,288,817,291,821,291,821,299,818,299,818,310,810,310,810,306,803,310,799,312,792,317,789,321,789,330,781,331,781,346,778,346,778,354,774,357,763,357,763,365,760,367,760,381,749,381,749,367,745,363,745,357,741,360,741,367,738,370,734,370,731,365,731,353,738,353,738,346,745,345,745,338,716,337,709,332,709,324,694,323,691,320,691,326,698,331,698,337,690,338,691,345,693,346,694,360,698,360,698,371,702,371,702,389,673,389,669,393,669,398,673,400,669,404,662,411,650,417,640,422,636,430,632,432,622,443,614,446,604,452,600,460,598,464,586,464,586,471,580,475,575,473,571,477,
571,500,575,503,575,511,571,512,571,521,568,523,568,551,560,552,560,556,553,559,552,562,560,563,560,569,556,569,549,567,542,570,542,580,538,582,538,585,525,585,525,582,520,579,516,573,513,569,513,560,510,557,510,550,506,547,506,539,502,535,498,528,494,520,492,511,488,508,488,500,484,497,484,488,480,484,477,478,473,472,473,468,470,463,470,452,466,448,466,436,463,435,463,418,459,417,459,413,463,409,463,395,459,393,457,390,450,396,445,398,440,401,434,402,430,399,423,397,418,393,412,388,408,382,405,380,405,375,419,374,419,371,405,371,401,365,397,361,394,358,394,354,405,352,405,347,408,346,420,349,437,346,437,342,430,334,426,330,423,328,423,317,416,316,416,302,423,302,423,295,433,295,434,299,441,295,448,295,452,288,455,284,455,281,463,277,467,270,470,266,477,260,484,254,488,254,488,238,492,237,492,230,488,229,484,225,473,225,473,208,470,204,470,197,477,197,477,193,473,188,470,184,459,182,459,172,466,172,470,168,473,165,488,165];

// x, y, grey level
const samples = [
490,172,132,500,168,132,480,182,134,492,182,132,505,176,132,475,175,142,463,177,174,470,177,160,480,192,130,490,190,132,500,190,146,477,202,182,490,203,175,505,200,158,511,190,160,518,200,176,516,184,168,530,195,163,540,190,162,555,188,162,567,185,163,560,198,164,550,205,163,535,210,161,525,212,160,
478,218,212,484,218,200,488,210,180,498,217,136,508,216,142,500,227,160,515,219,160,525,219,140,535,221,138,544,224,135,520,226,210,512,227,195,555,228,186,557,214,164,535,232,172,524,236,190,510,235,205,500,238,185,495,248,182,508,247,230,516,240,205,530,245,175,545,242,190,525,254,190,540,250,190,500,262,185,485,262,125,487,270,118,492,258,150,
515,260,205,528,260,205,540,262,215,560,260,208,578,263,180,565,269,178,552,260,215,475,278,155,488,280,158,500,272,162,512,274,172,525,276,172,545,273,215,565,278,200,460,290,165,480,290,162,495,292,190,506,293,160,515,285,176,530,289,215,530,280,190,545,287,228,560,295,200,572,290,212,590,297,222,
430,305,134,443,308,132,420,310,136,452,303,158,462,305,160,475,300,165,470,316,158,488,305,198,503,312,226,485,318,210,529,317,165,540,305,205,520,303,215,550,315,205,575,312,222,600,310,226,430,320,155,442,326,168,448,336,110,460,334,130,440,338,165,455,343,190,465,343,195,470,325,200,490,330,205,515,320,224,545,330,195,570,330,224,600,330,230,
410,350,140,412,360,128,400,357,160,425,358,155,440,352,205,446,348,198,450,362,85,440,374,82,430,380,85,452,377,78,424,378,95,455,388,110,447,388,130,415,382,152,433,391,138,420,389,150,442,400,115,460,370,130,462,355,170,468,361,88,478,366,115,490,366,130,500,362,155,499,350,125,490,345,145,505,353,110,511,345,145,475,350,165,482,355,165,520,340,175,532,345,185,518,362,170,
468,375,190,475,385,160,490,378,165,500,380,168,515,375,180,530,375,205,545,355,210,560,360,205,570,372,175,580,350,192,590,340,190,595,360,188,600,375,192,610,370,220,540,385,195,505,392,238,516,400,225,525,392,215,540,402,215,560,400,155,572,392,205,580,400,180,590,390,185,600,400,180,
470,398,168,482,402,180,495,400,180,475,415,205,485,422,210,500,420,215,515,412,205,530,420,175,545,425,130,540,430,140,555,420,150,560,435,165,570,420,190,580,430,165,595,430,160,595,420,175,610,415,190,604,408,200,610,440,165,593,443,220,592,452,210,575,455,185,600,450,170,
470,438,125,472,448,110,480,440,180,490,440,200,505,440,210,520,440,175,535,442,135,525,452,128,537,447,115,515,455,140,510,465,140,550,450,175,565,445,180,555,462,200,545,468,175,584,463,130,575,465,205,562,465,195,
476,463,120,477,470,65,485,463,205,480,455,185,490,468,175,495,475,145,508,468,115,522,473,220,530,470,165,540,475,205,515,480,75,528,488,90,500,482,130,487,485,85,495,494,80,502,498,75,510,495,130,490,478,135,520,495,150,540,485,215,550,480,140,560,478,165,552,495,115,568,492,95,568,503,90,560,500,160,545,490,190,490,508,95,500,508,165,512,505,170,522,503,60,521,512,60,530,510,75,537,513,60,545,503,80,553,512,100,560,510,160,568,512,95,538,520,65,548,518,110,528,520,110,510,520,185,500,520,165,502,530,130,515,525,170,519,529,75,512,532,180,527,535,230,535,530,190,540,535,70,538,546,70,545,535,190,553,525,180,565,525,170,555,540,160,565,545,130,547,547,100,555,553,120,525,547,165,515,545,195,508,543,200,545,560,120,535,555,150,518,560,205,530,565,210,520,572,190,532,580,185,538,572,185,557,566,150,
620,305,220,640,315,215,655,320,205,670,320,195,680,330,160,676,320,185,690,325,185,690,303,188,685,312,192,665,330,205,645,338,205,618,339,190,630,325,225,610,322,232,650,325,210,670,340,185,680,345,175,690,355,180,660,360,185,675,358,185,625,345,220,640,355,225,630,372,235,645,375,250,660,378,240,650,368,235,672,372,210,690,380,185,675,384,195,640,390,225,660,392,195,665,400,195,650,405,195,640,408,170,627,390,170,630,400,172,612,390,218,612,404,220,630,415,180,620,425,175,605,415,165,608,430,172,616,437,135,
700,313,170,705,318,168,712,316,165,720,320,185,730,325,200,740,320,190,715,328,205,742,332,150,748,325,150,735,334,175,738,300,190,750,305,172,757,300,160,762,312,145,755,315,165,770,295,180,765,305,182,778,300,172,790,290,150,800,295,146,785,283,150,805,302,150,790,305,155,780,318,198,785,310,190,770,322,195,762,325,175,748,345,140,755,335,145,752,352,140,765,340,165,775,340,165,770,350,165,757,360,145];

// left, top, right, bottom, grey level of the isolated dark patches
const patches = [770,276,785,284,8,777,272,782,277,8,792,272,803,281,8,803,281,807,285,8,810,287,822,311,22,749,366,761,382,42,731,352,738,371,80];

// Noise strength grows toward the south-west of the layer.
function roughness(x, y) {
  if (x > 700 || y < 225) return 4;
  if (y > 455 && x < 585) return 60;
  if (x < 550 && y > 320) return 22;
  return 13;
}

function inside(x, y) {
  let hit = false;
  for (let i = 0, j = outline.length - 2; i < outline.length; j = i, i += 2) {
    const xi = outline[i], yi = outline[i + 1], xj = outline[j], yj = outline[j + 1];
    if ((yi > y) !== (yj > y) && x < (xj - xi) * (y - yi) / (yj - yi) + xi) hit = !hit;
  }
  return hit;
}

let seed = 1901;
function random() {
  seed = (seed * 1664525 + 1013904223) % 4294967296;
  return seed / 4294967296;
}

function level(x, y) {
  for (let i = 0; i < patches.length; i += 5) {
    if (x > patches[i] && x < patches[i + 2] && y > patches[i + 1] && y < patches[i + 3]) {
      return patches[i + 4] + (random() - 0.5) * 20;
    }
  }
  let sum = 0, weight = 0;
  for (let i = 0; i < samples.length; i += 3) {
    const d = (samples[i] - x) ** 2 + (samples[i + 1] - y) ** 2;
    const w = 1 / (d + 12) ** 2;
    sum += w * samples[i + 2];
    weight += w;
  }
  return sum / weight + (random() - 0.5) * roughness(x, y);
}

const ctx = document.getElementById("map").getContext("2d");
for (let row = 0; row < 133; row++) {
  for (let col = 0; col < 165; col++) {
    const x = 314.2 + col * CELL, y = 135.8 + row * CELL;
    if (!inside(x + CELL / 2, y + CELL / 2)) continue;
    const g = Math.max(0, Math.min(255, Math.round(level(x + CELL / 2, y + CELL / 2))));
    const left = Math.round(x - OX), top = Math.round(y - OY);
    ctx.fillStyle = `rgb(${g},${g},${g})`;
    ctx.fillRect(left, top, Math.round(x + CELL - OX) - left, Math.round(y + CELL - OY) - top);
  }
}
```
